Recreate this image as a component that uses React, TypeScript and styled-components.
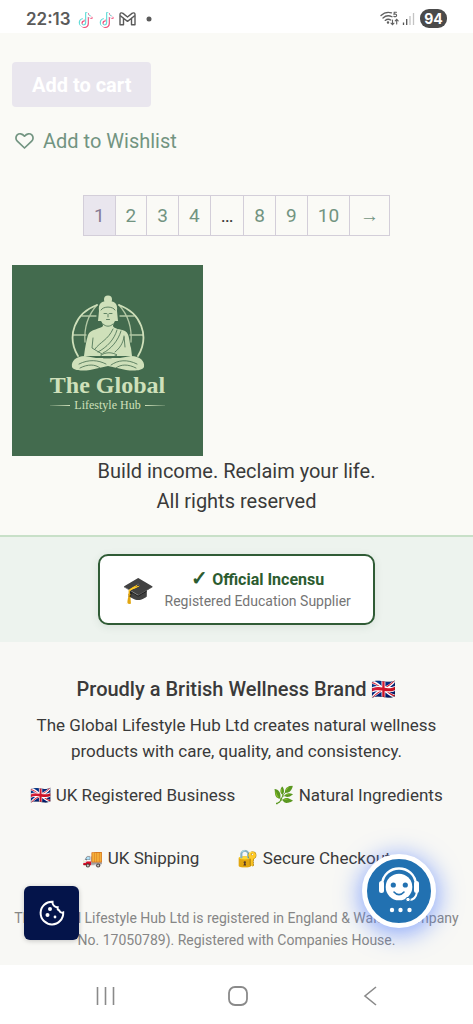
import React from "react";
import styled, { createGlobalStyle } from "styled-components";

const GlobalStyle = createGlobalStyle`
  * { box-sizing: border-box; }
  body {
    margin: 0;
    background: #fafaf6;
    color: #3a3a3a;
    font-family: Roboto, "Noto Color Emoji", "Noto Sans", sans-serif;
    font-size: 20px;
  }
  p, h2, ul { margin: 0; padding: 0; }
`;

const Page = styled.div`
  min-height: 100vh;
  display: flex;
  flex-direction: column;
`;

const StatusBar = styled.header`
  height: 33px;
  padding: 4px 26px 0;
  display: flex;
  align-items: center;
  justify-content: space-between;
  background: #fff;
  color: #5a5a5a;
`;

const StatusGroup = styled.div<{ $gap: number }>`
  display: flex;
  align-items: center;
  gap: ${(p) => p.$gap}px;
`;

const Clock = styled.span`
  font: 600 17px/20px Inter, sans-serif;
  margin-right: 2px;
`;

const Battery = styled.span`
  width: 27px;
  height: 19px;
  margin-left: 2px;
  border-radius: 9px;
  background: #4a4a4a;
  color: #fff;
  font: 700 14px/19px Inter, sans-serif;
  text-align: center;
`;

const Shop = styled.main`
  padding: 29px 12px 19px;
  display: flex;
  flex-direction: column;
  align-items: flex-start;
`;

const CartButton = styled.button`
  height: 45px;
  padding: 0 20px;
  border: 0;
  border-radius: 4px;
  background: #e9e6ee;
  color: #fff;
  font: 700 20px/24px Roboto, sans-serif;
`;

const WishlistLink = styled.a`
  margin: 22px 0 42px;
  padding-left: 2px;
  display: flex;
  align-items: center;
  gap: 8px;
  color: #729481;
  font-size: 20px;
  line-height: 24px;
  text-decoration: none;
`;

const Pagination = styled.nav`
  align-self: center;
  display: flex;
  margin-bottom: 29px;
  border: solid #d3ced9;
  border-width: 1px 0 1px 1px;
  font-size: 19px;
`;

const pageCell = `
  padding: 8px 10px 7px;
  border-right: 1px solid #d3ced9;
  line-height: 24px;
`;
const PageLink = styled.a`
  ${pageCell}
  color: #729481;
  text-decoration: none;
`;
const PageMark = styled.span<{ $current?: boolean }>`
  ${pageCell}
  background: ${(p) => (p.$current ? "#e9e6ee" : "transparent")};
  color: ${(p) => (p.$current ? "#877b93" : "#3a3a3a")};
`;

const Logo = styled.div`
  width: 191px;
  height: 191px;
  padding-top: 29px;
  display: flex;
  flex-direction: column;
  align-items: center;
  background: #436b4e;
  color: #cfe0ba;
  font-family: "Liberation Serif", serif;
`;
const LogoName = styled.span`
  font-size: 24px;
  font-weight: 700;
  line-height: 26px;
`;
const LogoSub = styled.span`
  display: flex;
  align-items: center;
  gap: 4px;
  font-size: 12px;
  line-height: 14px;
`;
const Rule = styled.span<{ $to: string }>`
  width: 20px;
  height: 1px;
  background: linear-gradient(to ${(p) => p.$to}, #cfe0ba, #cfe0ba33);
`;

const Tagline = styled.p`
  align-self: center;
  text-align: center;
  line-height: 30px;
`;

const BadgeBand = styled.section`
  padding: 17px 12px 17px;
  display: flex;
  justify-content: center;
  border-top: 2px solid #c8e0c8;
  background: #edf3ee;
`;
const Badge = styled.div`
  height: 71px;
  padding: 0 22px;
  display: flex;
  align-items: center;
  gap: 10px;
  border: 2px solid #305c36;
  border-radius: 10px;
  background: #fff;
  box-shadow: 0 2px 8px #305c361a;
  text-align: center;
`;
const BadgeTitle = styled.p`
  color: #2c5c30;
  font-size: 16px;
  font-weight: 700;
  line-height: 22px;
`;
const Tick = styled.span`
  font-size: 20px;
  line-height: 20px;
`;
const BadgeNote = styled.p`
  color: #757575;
  font-size: 14px;
  line-height: 20px;
`;
const Cap = styled.span`
  font-size: 26px;
  line-height: 32px;
`;

const Footer = styled.footer`
  flex: 1;
  padding-top: 33px;
  background: #f8f8f5;
  text-align: center;
`;
const FooterTitle = styled.h2`
  font-size: 20px;
  font-weight: 500;
  line-height: 28px;
`;
const FooterText = styled.p`
  padding: 9px 24px 19px;
  font-size: 17px;
  line-height: 26px;
`;
const Features = styled.ul`
  padding: 0 24px;
  display: flex;
  flex-wrap: wrap;
  justify-content: center;
  gap: 38px;
  list-style: none;
  font-size: 17px;
  line-height: 25px;
`;
const Legal = styled.p`
  padding: 36px 4px 13px;
  color: #868686;
  font-size: 14px;
  line-height: 22px;
`;

const NavBar = styled.nav`
  height: 59px;
  padding: 0 90px;
  display: flex;
  align-items: center;
  justify-content: space-between;
  background: #fff;
`;
const NavButton = styled.button`
  width: 30px;
  height: 30px;
  padding: 0;
  border: 0;
  background: none;
  color: #8a8a8a;
`;

const FloatButton = styled.button`
  position: fixed;
  padding: 0;
  border: 0;
  display: flex;
  align-items: center;
  justify-content: center;
  color: #fff;
`;
const CookieButton = styled(FloatButton)`
  left: 24px;
  bottom: 84px;
  width: 55px;
  height: 54px;
  border-radius: 6px;
  background: #04144a;
  box-shadow: 0 1px 5px #0003;
`;
const ChatButton = styled(FloatButton)`
  right: 37px;
  bottom: 96px;
  width: 74px;
  height: 74px;
  border: 5px solid #fff;
  border-radius: 50%;
  background: #2271b1;
  box-shadow: 0 4px 24px 2px #4f7cffaa;
`;

const TikTok = () => {
  const d = "M8.6 1.5v9.6a3 3 0 1 1-3-3M8.6 1.5c.3 2.6 2 4 4.4 4.2";
  return (
    <svg width="17" height="18" viewBox="0 0 16 17" fill="none" strokeWidth="2">
      <path d={d} transform="translate(1.6 1.8)" stroke="#f0507c" />
      <path d={d} transform="translate(0 .6)" stroke="#62dcd8" />
      <path d={d} transform="translate(.8 1.2)" stroke="#fff" strokeWidth="1.4" />
    </svg>
  );
};

const Mail = () => (
  <svg width="17" height="14" viewBox="0 0 17 14" fill="none" stroke="#5a5a5a" strokeWidth="1.4" strokeLinejoin="round">
    <path d="M1 12.8V2.5C1 .8 2.7 .4 4 1.4L8.5 5 13 1.4C14.3 .4 16 .8 16 2.5V12.8H12.5V6.2L8.5 9.4 4.5 6.2V12.8Z" />
    <path d="M1.2 3.6 4.5 6.2M15.8 3.6 12.5 6.2" />
  </svg>
);

const Wifi = () => (
  <svg width="19" height="15" viewBox="0 0 19 15" fill="none" stroke="#606060" strokeWidth="1.3" strokeLinecap="round">
    <path d="M1 4.5C4 1.6 8 .8 11.5 1.8M3 7C5.5 4.7 9 4.2 12 5.8M5.2 9.4C7 8 9 8 10.8 9" />
    <circle cx="8" cy="11.5" r=".6" fill="#606060" />
    <path d="M16.5 1.2H14.2L14 3.3C15.4 2.8 16.8 3.3 16.6 4.6 16.4 5.8 14.8 6 13.8 5.3M12.5 9V13.5M11 12.2 12.5 13.7 14 12.2M16.7 13V8.5M15.2 9.8 16.7 8.3 18.2 9.8" strokeWidth="1.1" />
  </svg>
);

const Signal = () => (
  <svg width="13" height="13" viewBox="0 0 13 13" strokeWidth="1.3">
    <path d="M1.5 13V10.5M4.7 13V7" stroke="#555" />
    <path d="M8 13V4M11.5 13V1" stroke="#c4c4c4" />
  </svg>
);

const Heart = () => (
  <svg width="21" height="18" viewBox="0 0 21 18" fill="none" stroke="#729481" strokeWidth="1.7" strokeLinejoin="round">
    <path d="M10.5 16 3.3 9.2C1.5 7.5 1.5 4.6 3.2 2.9 5 1.2 8.1 1.2 10.5 4.2 12.9 1.2 16 1.2 17.8 2.9 19.5 4.6 19.5 7.5 17.7 9.2Z" />
  </svg>
);

const Buddha = () => (
  <svg width="76" height="78" viewBox="0 0 76 78" fill="none" stroke="#cfe0ba" strokeLinecap="round">
    <g strokeWidth="1.3">
      <path d="M27 11C5 19-4 42 8 62M49 11C71 19 80 42 68 62" strokeWidth="1.8" />
      <path d="M27 11C18 21 14 34 15 48M49 11C58 21 62 34 61 48M12 22H26M50 22H64M3 41H16M60 41H73" opacity=".8" />
    </g>
    <g fill="#cfe0ba" stroke="none">
      <circle cx="38" cy="5.5" r="4" />
      <path d="M29 17C28 9 32 7 38 7S48 9 47 17L48 27 45 27C44 29 43 30 43 32 44 35 50 35 55 37 60 40 59 48 61 54L62 62H14C15 54 16 48 18 41 20 35 31 35 33 32 33 30 32 28 31 27L28 27Z" />
      <path d="M15 62C6 62 1 67 2 73 4 77 13 77 20 76L38 72 56 76C63 77 72 77 74 73 75 67 70 62 61 62L50 64H26Z" />
    </g>
    <g stroke="#436b4e" strokeWidth=".8">
      <path d="M31 16C33 12 43 12 45 16M34 19.5H36.5M39.5 19.5H42M38 20V23M36.5 25.5H39.5M33 30C36 33 40 33 43 30M23 44 22 54 32 60M54 42 55 53M25 55C30 48 38 46 43 35M28 58C37 53 44 46 47 36M33 59C41 55 48 47 51 37M45 58C50 54 53 49 54 43M31 61C36 58 42 58 47 61L41 64H34ZM9 70C19 65 28 66 36 70M67 70C57 65 48 66 41 71M10 74C18 70 25 70 30 74M66 74C58 70 51 70 46 74" />
    </g>
  </svg>
);

const Cookie = () => (
  <svg width="26" height="26" viewBox="0 0 26 26" fill="none" stroke="#fff" strokeWidth="2">
    <path d="M13.5 1.8A11.3 11.3 0 1 0 24.2 12.5C22.8 13 20.8 12.3 20.3 10.5 18.7 9.9 18.3 8.6 18.6 7.2 15.6 7.2 13.2 4.9 13.5 1.8Z" />
    <g fill="#fff" stroke="none">
      <circle cx="11" cy="9" r="2" />
      <circle cx="8.5" cy="15" r="2" />
      <circle cx="16" cy="17" r="1.4" />
    </g>
  </svg>
);

const Agent = () => (
  <svg width="64" height="64" viewBox="0 0 64 64" fill="none">
    <path d="M15 26C16 4 48 4 49 26" stroke="#fff" strokeWidth="2.4" />
    <rect x="12" y="22" width="5" height="12" rx="2.5" fill="#fff" />
    <rect x="47" y="22" width="5" height="12" rx="2.5" fill="#fff" />
    <circle cx="32" cy="28" r="13.3" fill="#fff" />
    <path d="M50 33C49 39 46 41 42 41" stroke="#fff" strokeWidth="2" />
    <circle cx="41" cy="40.5" r="2.2" fill="#fff" stroke="#2271b1" />
    <circle cx="26.3" cy="26" r="2.6" fill="#2271b1" />
    <circle cx="38.3" cy="26" r="2.6" fill="#2271b1" />
    <path d="M27 33C30 36.5 34 36.5 37 33" stroke="#2271b1" strokeWidth="1.6" strokeLinecap="round" />
    <g fill="#fff">
      <circle cx="25" cy="51" r="2.2" />
      <circle cx="33.5" cy="51" r="2.2" />
      <circle cx="42.5" cy="51" r="2.2" />
    </g>
  </svg>
);

const features = ["🇬🇧 UK Registered Business", "🌿 Natural Ingredients", "🚚 UK Shipping", "🔐 Secure Checkout"];

export default function App() {
  return (
    <Page>
      <GlobalStyle />
      <StatusBar>
        <StatusGroup $gap={4}>
          <Clock>22:13</Clock>
          <TikTok />
          <TikTok />
          <Mail />
          <svg width="18" height="6" viewBox="0 0 18 6"><circle cx="9" cy="3" r="2.5" fill="#5a5a5a" /></svg>
        </StatusGroup>
        <StatusGroup $gap={3}>
          <Wifi />
          <Signal />
          <Battery>94</Battery>
        </StatusGroup>
      </StatusBar>
      <Shop>
        <CartButton>Add to cart</CartButton>
        <WishlistLink href="#wishlist"><Heart />Add to Wishlist</WishlistLink>
        <Pagination aria-label="Product pages">
          <PageMark $current aria-current="page">1</PageMark>
          <PageLink href="#2">2</PageLink>
          <PageLink href="#3">3</PageLink>
          <PageLink href="#4">4</PageLink>
          <PageMark>…</PageMark>
          <PageLink href="#8">8</PageLink>
          <PageLink href="#9">9</PageLink>
          <PageLink href="#10">10</PageLink>
          <PageLink href="#next">→</PageLink>
        </Pagination>
        <Logo>
          <Buddha />
          <LogoName>The Global</LogoName>
          <LogoSub><Rule $to="left" />Lifestyle Hub<Rule $to="right" /></LogoSub>
        </Logo>
        <Tagline>Build income. Reclaim your life.<br />All rights reserved</Tagline>
      </Shop>
      <BadgeBand>
        <Badge>
          <Cap>🎓</Cap>
          <div>
            <BadgeTitle><Tick>✓</Tick> Official Incensu</BadgeTitle>
            <BadgeNote>Registered Education Supplier</BadgeNote>
          </div>
        </Badge>
      </BadgeBand>
      <Footer>
        <FooterTitle>Proudly a British Wellness Brand 🇬🇧</FooterTitle>
        <FooterText>The Global Lifestyle Hub Ltd creates natural wellness products with care, quality, and consistency.</FooterText>
        <Features>
          {features.map((f) => <li key={f}>{f}</li>)}
        </Features>
        <Legal>The Global Lifestyle Hub Ltd is registered in England &amp; Wales (Company No. 17050789). Registered with Companies House.</Legal>
      </Footer>
      <NavBar aria-label="System">
        <NavButton aria-label="Recent apps">
          <svg width="30" height="30" viewBox="0 0 30 30" stroke="currentColor" strokeWidth="1.6"><path d="M7.5 7V25M15.5 7V25M23.5 7V25" /></svg>
        </NavButton>
        <NavButton aria-label="Home">
          <svg width="30" height="30" viewBox="0 0 30 30" fill="none" stroke="currentColor" strokeWidth="1.8"><rect x="7" y="7" width="18" height="18" rx="6" /></svg>
        </NavButton>
        <NavButton aria-label="Back">
          <svg width="30" height="30" viewBox="0 0 30 30" fill="none" stroke="currentColor" strokeWidth="1.6"><path d="M23 7 12 16 23 25" /></svg>
        </NavButton>
      </NavBar>
      <CookieButton aria-label="Cookie settings"><Cookie /></CookieButton>
      <ChatButton aria-label="Chat with support"><Agent /></ChatButton>
    </Page>
  );
}
